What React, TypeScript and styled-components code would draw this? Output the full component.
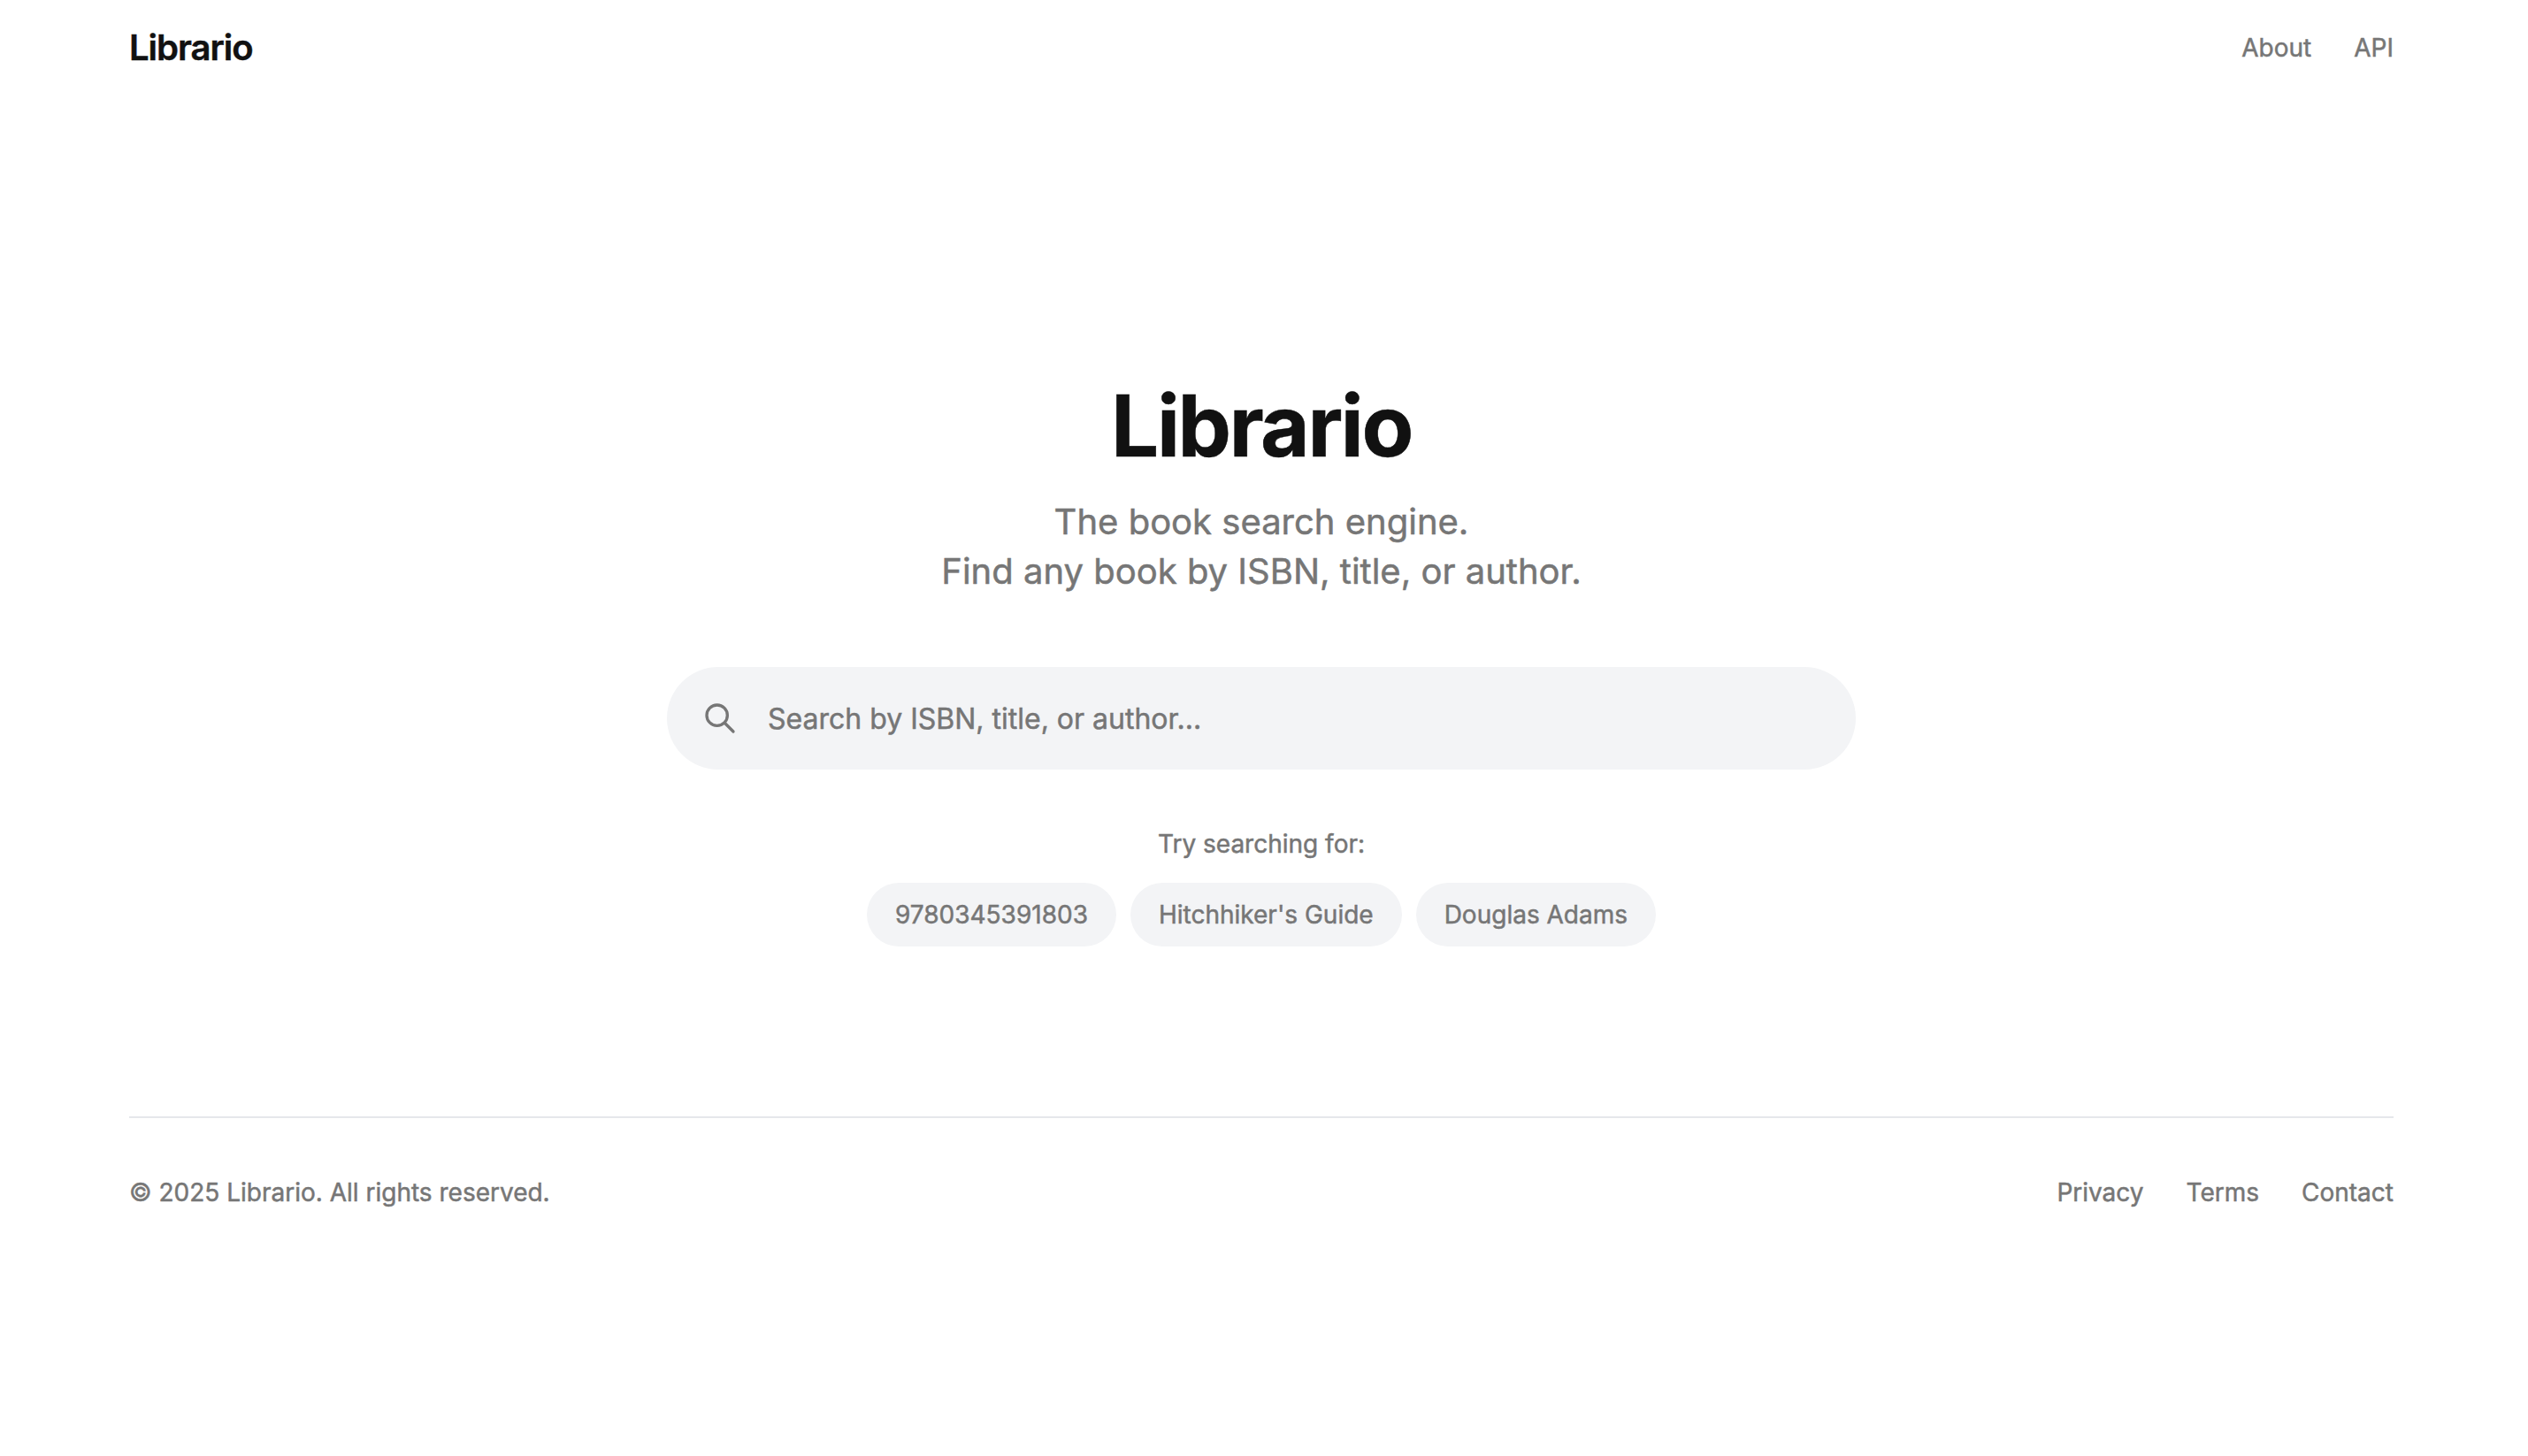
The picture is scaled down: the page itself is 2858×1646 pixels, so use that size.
import React from "react";
import styled, { createGlobalStyle } from "styled-components";

const GlobalStyle = createGlobalStyle`
  *,
  *::before,
  *::after {
    box-sizing: border-box;
  }

  body {
    margin: 0;
    background: #fff;
    color: #767676;
    font-family: Inter, "Liberation Sans", sans-serif;
    font-size: 28px;
    line-height: 40px;
    -webkit-font-smoothing: antialiased;
    -webkit-text-stroke: 0.5px currentColor;
  }
`;

const Page = styled.div`
  width: 2560px;
  margin-left: 146px;
`;

const Header = styled.header`
  display: flex;
  align-items: center;
  justify-content: space-between;
  height: 108px;
`;

const Logo = styled.a`
  color: #111;
  font-size: 40px;
  font-weight: 600;
  letter-spacing: -0.025em;
  text-decoration: none;
`;

const Links = styled.nav`
  display: flex;
  gap: 48px;
`;

const StyledLink = styled.a`
  color: inherit;
  text-decoration: none;
`;

const Hero = styled.main`
  display: flex;
  flex-direction: column;
  align-items: center;
  height: 1154px;
  padding-top: 325px;
`;

const Title = styled.h1`
  margin: 0;
  color: #111;
  font-size: 96px;
  font-weight: 700;
  line-height: 96px;
  letter-spacing: -0.025em;
`;

const Subtitle = styled.p`
  margin: 33px 0 0;
  font-size: 40px;
  line-height: 56px;
  text-align: center;
`;

const SearchForm = styled.form`
  display: flex;
  align-items: center;
  width: 1344px;
  height: 116px;
  margin-top: 80px;
  padding: 0 40px;
  border-radius: 58px;
  background: #f3f4f6;
`;

const SearchIcon = styled.svg`
  width: 40px;
  height: 40px;
  flex-shrink: 0;
`;

const SearchInput = styled.input`
  flex: 1;
  margin-left: 34px;
  padding: 2px 0 0;
  border: 0;
  outline: none;
  background: transparent;
  color: #111;
  font: inherit;
  font-size: 32px;

  &::placeholder {
    color: #767676;
    opacity: 1;
    -webkit-text-stroke: 0.5px #767676;
  }
`;

const Hint = styled.p`
  margin: 64px 0 24px;
`;

const Chips = styled.div`
  display: flex;
  gap: 16px;
`;

const Chip = styled.button`
  height: 72px;
  padding: 0 32px;
  border: 0;
  border-radius: 36px;
  background: #f3f4f6;
  color: inherit;
  font: inherit;
  cursor: pointer;
`;

const Footer = styled.footer`
  display: flex;
  align-items: center;
  justify-content: space-between;
  padding: 64px 0;
  border-top: 2px solid #e5e7eb;
`;

const suggestions = ["9780345391803", "Hitchhiker's Guide", "Douglas Adams"];

const App = () => {
  const [query, setQuery] = React.useState("");

  return (
    <>
      <GlobalStyle />
      <Page>
        <Header>
          <Logo href="#">Librario</Logo>
          <Links>
            <StyledLink href="#about">About</StyledLink>
            <StyledLink href="#api">API</StyledLink>
          </Links>
        </Header>
        <Hero>
          <Title>Librario</Title>
          <Subtitle>
            The book search engine.
            <br />
            Find any book by ISBN, title, or author.
          </Subtitle>
          <SearchForm onSubmit={(e) => e.preventDefault()}>
            <SearchIcon
              viewBox="0 0 24 24"
              fill="none"
              stroke="currentColor"
              strokeWidth="2"
              strokeLinecap="round"
              strokeLinejoin="round"
            >
              <path d="M21 21l-6-6m2-5a7 7 0 11-14 0 7 7 0 0114 0z" />
            </SearchIcon>
            <SearchInput
              value={query}
              onChange={(e) => setQuery(e.target.value)}
              placeholder="Search by ISBN, title, or author..."
            />
          </SearchForm>
          <Hint>Try searching for:</Hint>
          <Chips>
            {suggestions.map((text) => (
              <Chip key={text} type="button" onClick={() => setQuery(text)}>
                {text}
              </Chip>
            ))}
          </Chips>
        </Hero>
        <Footer>
          <span>© 2025 Librario. All rights reserved.</span>
          <Links>
            <StyledLink href="#privacy">Privacy</StyledLink>
            <StyledLink href="#terms">Terms</StyledLink>
            <StyledLink href="#contact">Contact</StyledLink>
          </Links>
        </Footer>
      </Page>
    </>
  );
};

export default App;
